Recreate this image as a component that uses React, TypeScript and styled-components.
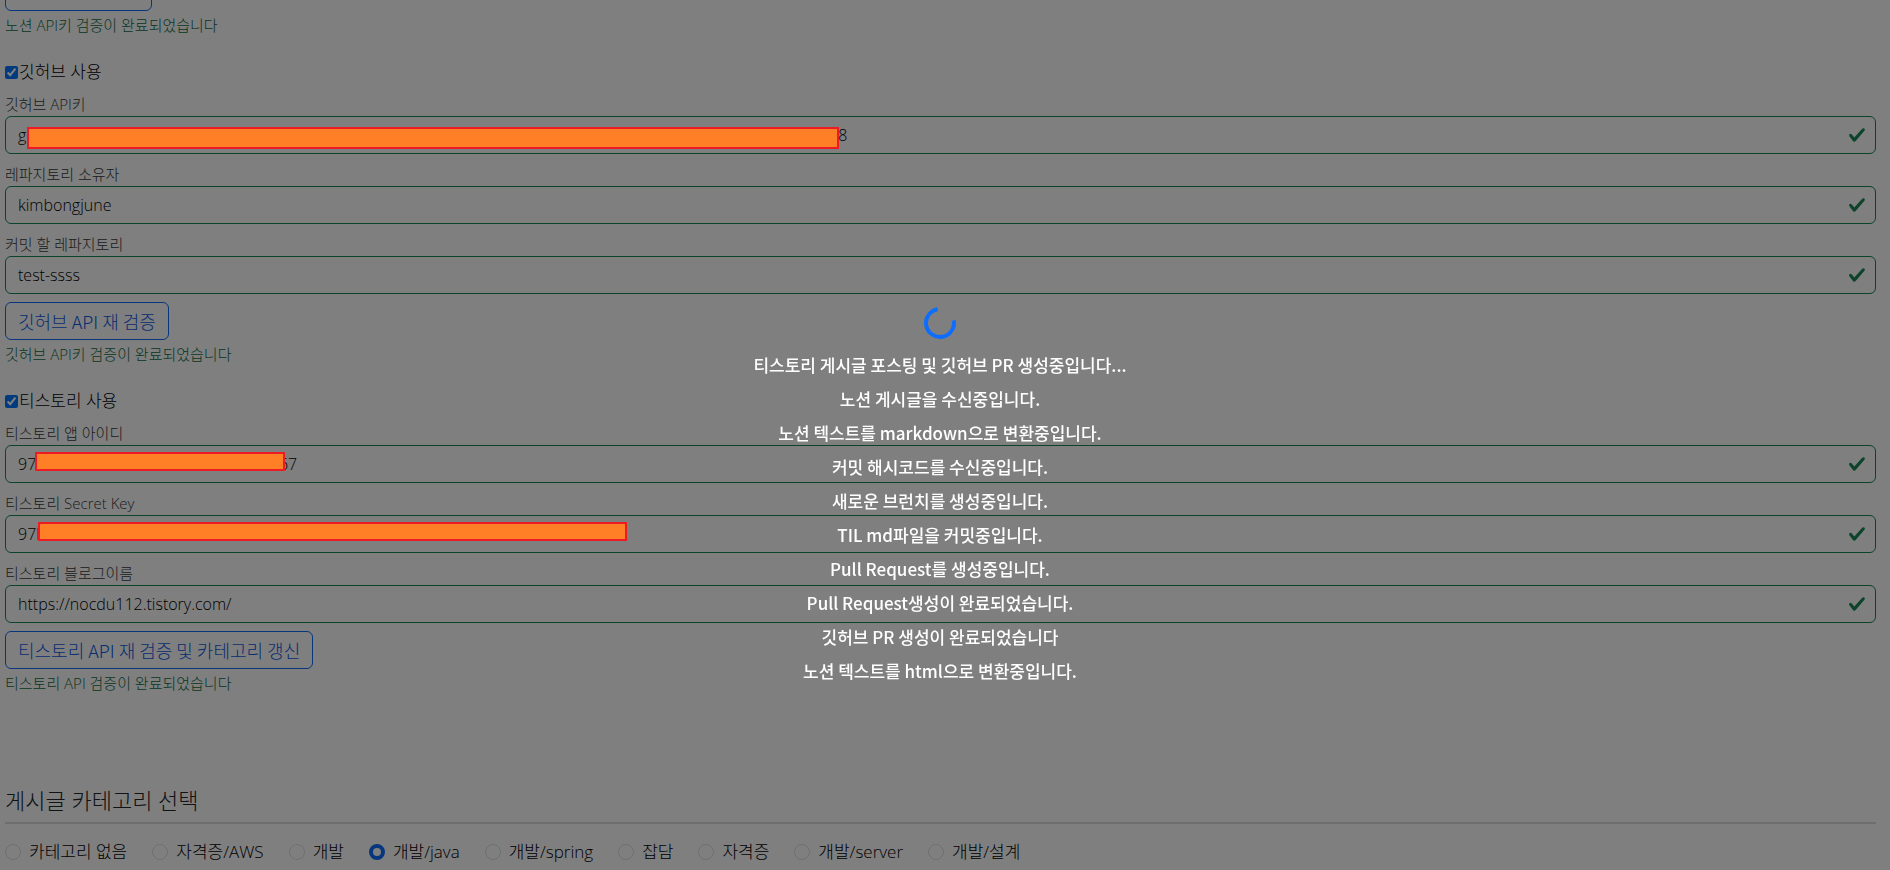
import React from 'react';
import styled, { createGlobalStyle } from 'styled-components';

const GlobalStyle = createGlobalStyle`
  *, *::before, *::after { box-sizing: border-box; }
  body {
    margin: 0;
    background: #fff;
    color: #212529;
    font-family: "Open Sans", "Noto Sans CJK KR", sans-serif;
    font-size: 17px;
    font-weight: 300;
    line-height: 24px;
    overflow: hidden;
  }
`;

const Page = styled.main`
  margin-top: -35px;
  padding: 0 14px 0 5px;
`;

const Section = styled.section`
  display: flex;
  flex-direction: column;
  align-items: flex-start;
  margin-bottom: 24px;
`;

const CheckLabel = styled.label`
  display: flex;
  align-items: center;
  color: #000;
`;

const CheckBox = styled.input`
  width: 13px;
  height: 13px;
  margin: 0 1px 0 0;
  accent-color: #0075ff;
`;

const FieldBlock = styled.div`
  width: 100%;
  margin-top: 8px;
`;

const FieldLabel = styled.label`
  display: block;
  height: 24px;
  font-size: 15px;
  color: #343a40;
`;

const InputWrap = styled.div`
  position: relative;
  display: flex;
`;

const TextInput = styled.input`
  width: 100%;
  height: 38px;
  padding: 6px 40px 6px 12px;
  border: 1px solid #198754;
  border-radius: 6px;
  background: #fff;
  color: #000;
  font: 300 16px/24px "Open Sans", "Noto Sans CJK KR", sans-serif;
  outline: none;
`;

const ValidIcon = styled.svg`
  position: absolute;
  top: 10px;
  right: 10px;
  width: 18px;
  height: 18px;
`;

const Redaction = styled.span<{ $left: number; $top: number; $width: number; $height: number }>`
  position: absolute;
  z-index: 20;
  left: ${(p) => p.$left}px;
  top: ${(p) => p.$top}px;
  width: ${(p) => p.$width}px;
  height: ${(p) => p.$height}px;
  border: 2px solid #ed1c24;
  background: #ff7f27;
`;

const OutlineButton = styled.button`
  min-width: 147px;
  height: 38px;
  margin-top: 8px;
  padding: 0 12px;
  border: 1px solid #0d6efd;
  border-radius: 6px;
  background: transparent;
  color: #0d5ae0;
  font: 300 18px/24px "Noto Sans CJK KR", "Noto Sans", sans-serif;
`;

const ValidText = styled.p`
  margin: 4px 0 0;
  font-size: 15px;
  line-height: 21px;
  color: #0f6b3f;
`;

const CategoryTitle = styled.h2`
  margin: 92px 0 0;
  padding-bottom: 8px;
  border-bottom: 2px solid #dcdcdc;
  font-size: 22px;
  font-weight: 300;
  line-height: 28px;
`;

const CategoryList = styled.div`
  display: flex;
  flex-wrap: wrap;
  gap: 25px;
  margin-top: 16px;
  color: #000;
`;

const RadioLabel = styled.label`
  display: flex;
  align-items: center;
  gap: 8px;
`;

const Radio = styled.input`
  appearance: none;
  width: 16px;
  height: 16px;
  margin: 0;
  border: 1px solid #e0e0e0;
  border-radius: 50%;
  &:checked {
    border: 4px solid #0d6efd;
  }
`;

const Overlay = styled.div`
  position: fixed;
  inset: 0;
  z-index: 10;
  display: flex;
  flex-direction: column;
  align-items: center;
  gap: 10px;
  padding: 307px 10px 0 0;
  background: rgba(0, 0, 0, 0.5);
  color: #fff;
  font-family: "Noto Sans CJK KR", "Noto Sans", sans-serif;
  font-weight: 500;
`;

const Spinner = styled.div`
  width: 32px;
  height: 32px;
  margin-bottom: 4px;
  border: 4px solid #0d6efd;
  border-right-color: transparent;
  border-radius: 50%;
  transform: rotate(-55deg);
`;

const Message = styled.p`
  margin: 0;
`;

interface Mask {
  left: number;
  top: number;
  width: number;
  height: number;
}

interface FieldProps {
  id: string;
  label: string;
  value: string;
  mask?: Mask;
}

const Field = ({ id, label, value, mask }: FieldProps) => (
  <FieldBlock>
    <FieldLabel htmlFor={id}>{label}</FieldLabel>
    <InputWrap>
      <TextInput id={id} type="text" defaultValue={value} />
      <ValidIcon viewBox="0 0 8 8" aria-hidden="true">
        <path
          fill="#198754"
          d="M2.3 6.73.6 4.53c-.4-1.04.46-1.4 1.1-.8l1.1 1.4 3.4-3.8c.6-.63 1.6-.27 1.2.7l-4 4.6c-.43.5-.8.4-1.1.1z"
        />
      </ValidIcon>
      {mask && <Redaction $left={mask.left} $top={mask.top} $width={mask.width} $height={mask.height} />}
    </InputWrap>
  </FieldBlock>
);

/* Blank run standing in for the hidden part of a key. */
const blank = (ems: number, tail: string) => '\u2003'.repeat(ems) + tail;

const categories = [
  '카테고리 없음',
  '자격증/AWS',
  '개발',
  '개발/java',
  '개발/spring',
  '잡담',
  '자격증',
  '개발/server',
  '개발/설계',
];

const messages = [
  '티스토리 게시글 포스팅 및 깃허브 PR 생성중입니다...',
  '노션 게시글을 수신중입니다.',
  '노션 텍스트를 markdown으로 변환중입니다.',
  '커밋 해시코드를 수신중입니다.',
  '새로운 브런치를 생성중입니다.',
  'TIL md파일을 커밋중입니다.',
  'Pull Request를 생성중입니다.',
  'Pull Request생성이 완료되었습니다.',
  '깃허브 PR 생성이 완료되었습니다',
  '노션 텍스트를 html으로 변환중입니다.',
];

export default function App() {
  return (
    <>
      <GlobalStyle />
      <Page>
        <Section>
          <OutlineButton type="button" aria-label="노션 API 재 검증" />
          <ValidText>노션 API키 검증이 완료되었습니다</ValidText>
        </Section>

        <Section>
          <CheckLabel>
            <CheckBox type="checkbox" defaultChecked />
            깃허브 사용
          </CheckLabel>
          <Field
            id="github-key"
            label="깃허브 API키"
            value={`g${blank(50, '\u2002\u2005')}8`}
            mask={{ left: 22, top: 11, width: 812, height: 22 }}
          />
          <Field id="github-owner" label="레파지토리 소유자" value="kimbongjune" />
          <Field id="github-repo" label="커밋 할 레파지토리" value="test-ssss" />
          <OutlineButton type="button">깃허브 API 재 검증</OutlineButton>
          <ValidText>깃허브 API키 검증이 완료되었습니다</ValidText>
        </Section>

        <Section>
          <CheckLabel>
            <CheckBox type="checkbox" defaultChecked />
            티스토리 사용
          </CheckLabel>
          <Field
            id="tistory-app"
            label="티스토리 앱 아이디"
            value={`97${blank(15, '\u2006')}67`}
            mask={{ left: 30, top: 7, width: 250, height: 19 }}
          />
          <Field
            id="tistory-secret"
            label="티스토리 Secret Key"
            value={`97b${blank(35, '\u2002\u2004')}2`}
            mask={{ left: 33, top: 7, width: 589, height: 19 }}
          />
          <Field id="tistory-blog" label="티스토리 블로그이름" value="https://nocdu112.tistory.com/" />
          <OutlineButton type="button">티스토리 API 재 검증 및 카테고리 갱신</OutlineButton>
          <ValidText>티스토리 API 검증이 완료되었습니다</ValidText>
        </Section>

        <CategoryTitle>게시글 카테고리 선택</CategoryTitle>
        <CategoryList role="radiogroup">
          {categories.map((name) => (
            <RadioLabel key={name}>
              <Radio type="radio" name="category" defaultChecked={name === '개발/java'} />
              {name}
            </RadioLabel>
          ))}
        </CategoryList>
      </Page>

      <Overlay role="status">
        <Spinner />
        {messages.map((text) => (
          <Message key={text}>{text}</Message>
        ))}
      </Overlay>
    </>
  );
}
